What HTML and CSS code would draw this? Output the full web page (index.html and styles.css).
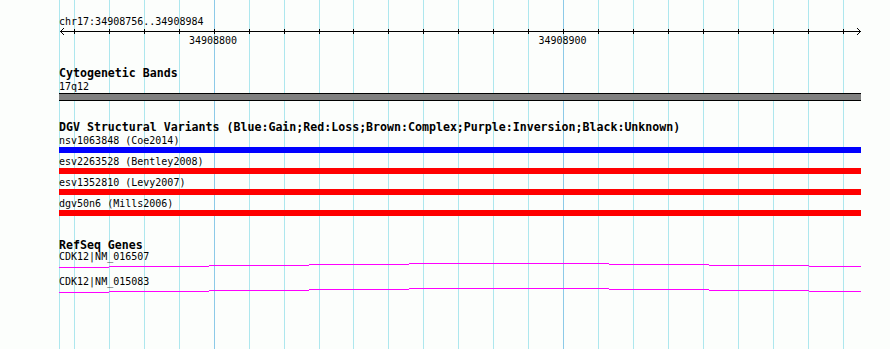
FILE: index.html
```html
<!DOCTYPE html>
<html lang="en">
<head>
  <meta charset="UTF-8" />
  <title>chr17:34908756..34908984</title>
  <link rel="stylesheet" href="styles.css">
</head>
<body>
  <div class="browser">
    <!-- background grid, one line per 10 bp -->
    <svg class="grid" width="890" height="349">
      <g class="minor">
        <line x1="59.5" y1="0" x2="59.5" y2="349" />
        <line x1="74.5" y1="0" x2="74.5" y2="349" />
        <line x1="109.5" y1="0" x2="109.5" y2="349" />
        <line x1="144.5" y1="0" x2="144.5" y2="349" />
        <line x1="179.5" y1="0" x2="179.5" y2="349" />
        <line x1="249.5" y1="0" x2="249.5" y2="349" />
        <line x1="284.5" y1="0" x2="284.5" y2="349" />
        <line x1="319.5" y1="0" x2="319.5" y2="349" />
        <line x1="353.5" y1="0" x2="353.5" y2="349" />
        <line x1="388.5" y1="0" x2="388.5" y2="349" />
        <line x1="423.5" y1="0" x2="423.5" y2="349" />
        <line x1="458.5" y1="0" x2="458.5" y2="349" />
        <line x1="493.5" y1="0" x2="493.5" y2="349" />
        <line x1="528.5" y1="0" x2="528.5" y2="349" />
        <line x1="598.5" y1="0" x2="598.5" y2="349" />
        <line x1="633.5" y1="0" x2="633.5" y2="349" />
        <line x1="668.5" y1="0" x2="668.5" y2="349" />
        <line x1="703.5" y1="0" x2="703.5" y2="349" />
        <line x1="738.5" y1="0" x2="738.5" y2="349" />
        <line x1="773.5" y1="0" x2="773.5" y2="349" />
        <line x1="808.5" y1="0" x2="808.5" y2="349" />
        <line x1="843.5" y1="0" x2="843.5" y2="349" />
      </g>
      <g class="major">
        <line x1="214.5" y1="0" x2="214.5" y2="349" />
        <line x1="563.5" y1="0" x2="563.5" y2="349" />
      </g>
    </svg>

    <div class="tracks">
      <div class="ruler">
        <div class="ref-name">chr17:34908756..34908984</div>
        <svg class="scale" width="802" height="22">
          <g class="axis">
            <line x1="1" y1="3.5" x2="802" y2="3.5" />
            <polyline points="5,0 1.5,3.5 5,7" />
            <polyline points="798,0 801.5,3.5 798,7" />
            <line x1="15.5" y1="1" x2="15.5" y2="6" />
            <line x1="50.5" y1="1" x2="50.5" y2="6" />
            <line x1="85.5" y1="1" x2="85.5" y2="6" />
            <line x1="120.5" y1="1" x2="120.5" y2="6" />
            <line x1="155.5" y1="1" x2="155.5" y2="6" />
            <line x1="190.5" y1="1" x2="190.5" y2="6" />
            <line x1="225.5" y1="1" x2="225.5" y2="6" />
            <line x1="260.5" y1="1" x2="260.5" y2="6" />
            <line x1="294.5" y1="1" x2="294.5" y2="6" />
            <line x1="329.5" y1="1" x2="329.5" y2="6" />
            <line x1="364.5" y1="1" x2="364.5" y2="6" />
            <line x1="399.5" y1="1" x2="399.5" y2="6" />
            <line x1="434.5" y1="1" x2="434.5" y2="6" />
            <line x1="469.5" y1="1" x2="469.5" y2="6" />
            <line x1="504.5" y1="1" x2="504.5" y2="6" />
            <line x1="539.5" y1="1" x2="539.5" y2="6" />
            <line x1="574.5" y1="1" x2="574.5" y2="6" />
            <line x1="609.5" y1="1" x2="609.5" y2="6" />
            <line x1="644.5" y1="1" x2="644.5" y2="6" />
            <line x1="679.5" y1="1" x2="679.5" y2="6" />
            <line x1="714.5" y1="1" x2="714.5" y2="6" />
            <line x1="749.5" y1="1" x2="749.5" y2="6" />
            <line x1="784.5" y1="1" x2="784.5" y2="6" />
          </g>
          <text class="tick-label" x="154" y="16">34908800</text>
          <text class="tick-label" x="503.5" y="16">34908900</text>
        </svg>
      </div>

      <div class="track cyto">
        <div class="track-title">Cytogenetic Bands</div>
        <div class="feature-label">17q12</div>
        <div class="band"></div>
      </div>

      <div class="track dgv">
        <div class="track-title">DGV Structural Variants (Blue:Gain;Red:Loss;Brown:Complex;Purple:Inversion;Black:Unknown)</div>
        <div class="variant">
          <div class="feature-label">nsv1063848 (Coe2014)</div>
          <div class="bar gain"></div>
        </div>
        <div class="variant">
          <div class="feature-label">esv2263528 (Bentley2008)</div>
          <div class="bar loss"></div>
        </div>
        <div class="variant">
          <div class="feature-label">esv1352810 (Levy2007)</div>
          <div class="bar loss"></div>
        </div>
        <div class="variant">
          <div class="feature-label">dgv50n6 (Mills2006)</div>
          <div class="bar loss"></div>
        </div>
      </div>

      <div class="track genes">
        <div class="track-title">RefSeq Genes</div>
        <div class="gene">
          <div class="feature-label">CDK12|NM_016507</div>
          <svg class="intron" width="802" height="15">
            <path d="M0 5.5H50M50 4.5H150M150 3.5H250M250 2.5H350M350 1.5H550M550 2.5H650M650 3.5H750M750 4.5H802" />
          </svg>
        </div>
        <div class="gene">
          <div class="feature-label">CDK12|NM_015083</div>
          <svg class="intron" width="802" height="15">
            <path d="M0 5.5H50M50 4.5H150M150 3.5H250M250 2.5H350M350 1.5H550M550 2.5H650M650 3.5H750M750 4.5H802" />
          </svg>
        </div>
      </div>
    </div>
  </div>
</body>
</html>
```

FILE: styles.css
```css
body {
  margin: 0;
  background: #fcfefc;
  color: #000;
  font-family: 'DejaVu Sans Mono', 'Liberation Mono', monospace;
  font-size: 10px;
}

.browser {
  position: relative;
  width: 890px;
  height: 349px;
  overflow: hidden;
}

.grid {
  position: absolute;
  top: 0;
  left: 0;
}

.grid line {
  stroke-width: 1;
  shape-rendering: crispEdges;
}

.grid .minor {
  stroke: #ade7ee;
}

.grid .major {
  stroke: #8ccae8;
}

.tracks {
  position: relative;
  width: 802px;
  padding: 15px 0 0 59px;
}

.ref-name {
  height: 13px;
  line-height: 13px;
}

.scale {
  display: block;
}

.axis line,
.axis polyline {
  stroke: #000;
  stroke-width: 1;
  fill: none;
}

.axis line {
  shape-rendering: crispEdges;
}

.tick-label {
  font-family: 'DejaVu Sans Mono', monospace;
  font-size: 10px;
  text-anchor: middle;
  fill: #000;
}

.track-title {
  font-weight: bold;
  font-size: 11.6px;
  line-height: 13px;
  height: 13px;
  white-space: nowrap;
}

.feature-label {
  line-height: 13px;
  height: 13px;
  white-space: nowrap;
}

.cyto {
  margin-top: 17px;
}

.band {
  height: 6px;
  border-top: 1px solid #000;
  border-bottom: 1px solid #000;
  background: #808080;
}

.dgv {
  margin-top: 20px;
}

.variant {
  margin-bottom: 2px;
}

.bar {
  height: 6px;
}

.gain {
  background: #0000ff;
}

.loss {
  background: #ff0000;
}

.genes {
  margin-top: 23px;
}

.gene .feature-label {
  line-height: 10px;
  height: 10px;
}

.intron {
  display: block;
}

.intron path {
  stroke: #ff00ff;
  stroke-width: 1;
  fill: none;
  shape-rendering: crispEdges;
}
```
